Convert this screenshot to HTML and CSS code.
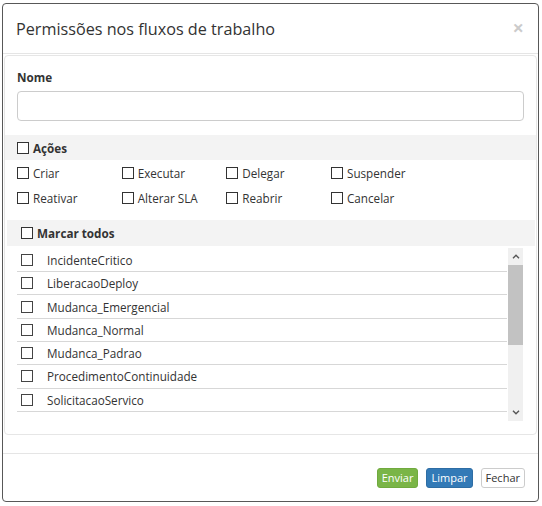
FILE: index.html
```html
<!DOCTYPE html>
<html lang="pt">
<head>
<meta charset="utf-8">
<title>Permissões nos fluxos de trabalho</title>
<link rel="stylesheet" href="styles.css">
</head>
<body>
<div class="modal">
  <div class="modal-header">
    <h4 class="modal-title">Permissões nos fluxos de trabalho</h4>
    <span class="close">×</span>
  </div>
  <div class="panel">
    <label class="field-label">Nome</label>
    <input class="text-input" type="text">
    <div class="section-bar">
      <input class="chk" type="checkbox"><span>Ações</span>
    </div>
    <div class="actions">
      <label class="action"><input class="chk" type="checkbox"><span>Criar</span></label>
      <label class="action"><input class="chk" type="checkbox"><span>Executar</span></label>
      <label class="action"><input class="chk" type="checkbox"><span>Delegar</span></label>
      <label class="action"><input class="chk" type="checkbox"><span>Suspender</span></label>
      <label class="action"><input class="chk" type="checkbox"><span>Reativar</span></label>
      <label class="action"><input class="chk" type="checkbox"><span>Alterar SLA</span></label>
      <label class="action"><input class="chk" type="checkbox"><span>Reabrir</span></label>
      <label class="action"><input class="chk" type="checkbox"><span>Cancelar</span></label>
    </div>
    <div class="workflows">
      <div class="wf-bar">
        <input class="chk" type="checkbox"><span>Marcar todos</span>
      </div>
      <div class="wf-list">
        <div class="rows">
          <div class="row"><input class="chk row-chk" type="checkbox"><span>IncidenteCritico</span></div>
          <div class="row"><input class="chk row-chk" type="checkbox"><span>LiberacaoDeploy</span></div>
          <div class="row"><input class="chk row-chk" type="checkbox"><span>Mudanca_Emergencial</span></div>
          <div class="row"><input class="chk row-chk" type="checkbox"><span>Mudanca_Normal</span></div>
          <div class="row"><input class="chk row-chk" type="checkbox"><span>Mudanca_Padrao</span></div>
          <div class="row"><input class="chk row-chk" type="checkbox"><span>ProcedimentoContinuidade</span></div>
          <div class="row"><input class="chk row-chk" type="checkbox"><span>SolicitacaoServico</span></div>
        </div>
        <div class="scrollbar">
          <div class="sb-arrow"><svg width="8" height="5" viewBox="0 0 8 5"><path d="M1 4.3 L4 1.3 L7 4.3" stroke="#555" stroke-width="1.4" fill="none"/></svg></div>
          <div class="sb-thumb"></div>
          <div class="sb-track"></div>
          <div class="sb-arrow"><svg width="8" height="5" viewBox="0 0 8 5"><path d="M1 0.7 L4 3.7 L7 0.7" stroke="#555" stroke-width="1.4" fill="none"/></svg></div>
        </div>
      </div>
    </div>
  </div>
  <div class="modal-footer">
    <button class="btn btn-success">Enviar</button>
    <button class="btn btn-primary">Limpar</button>
    <button class="btn btn-default">Fechar</button>
  </div>
</div>
</body>
</html>
```
FILE: styles.css
```css
html, body {
  margin: 0;
  padding: 0;
  background: #fff;
}
body {
  font-family: "Open Sans", "DejaVu Sans", sans-serif;
  font-size: 11.7px;
  color: #333;
}
.modal {
  box-sizing: border-box;
  width: 537px;
  height: 499px;
  margin: 3px 0 0 2px;
  border: 1px solid #585858;
  border-radius: 4px;
  background: #fff;
  display: flex;
  flex-direction: column;
}
.modal-header {
  box-sizing: border-box;
  height: 50px;
  flex: none;
  border-bottom: 1px solid #e5e5e5;
  display: flex;
  align-items: center;
  justify-content: space-between;
  padding: 0 14px 0 13px;
}
.modal-title {
  margin: 0;
  font-size: 16.2px;
  font-weight: 400;
  color: #333;
  line-height: 20px;
}
.close {
  font-size: 20px;
  font-weight: 700;
  line-height: 1;
  color: #000;
  opacity: 0.2;
  margin-top: -2px;
}
.panel {
  box-sizing: border-box;
  flex: none;
  height: 380px;
  margin: 1px 1px 18px 1px;
  border: 1px solid #e6e6e6;
  border-radius: 4px;
  padding-top: 13px;
}
.field-label {
  display: block;
  margin: 0 12px;
  font-weight: 700;
  line-height: 17px;
}
.text-input {
  display: block;
  box-sizing: border-box;
  width: calc(100% - 24px);
  height: 30px;
  margin: 5px 12px 0;
  border: 1px solid #ccc;
  border-radius: 4px;
  padding: 0 8px;
  font: inherit;
}
.chk {
  appearance: none;
  -webkit-appearance: none;
  box-sizing: border-box;
  width: 12px;
  height: 12px;
  margin: 0 4px 0 0;
  border: 1px solid #333;
  border-radius: 0;
  background: #fff;
  flex: none;
}
.section-bar {
  margin-top: 14px;
  height: 25px;
  background: #f3f3f3;
  display: flex;
  align-items: center;
  padding-left: 12px;
  font-weight: 700;
}
.actions {
  display: grid;
  grid-template-columns: repeat(4, 104.67px);
  grid-auto-rows: 25px;
  padding-left: 12px;
}
.action {
  display: flex;
  align-items: center;
  white-space: nowrap;
}
.workflows {
  margin: 10px 1px 0 2px;
}
.wf-bar {
  height: 26px;
  background: #f3f3f3;
  display: flex;
  align-items: center;
  padding-left: 14px;
  font-weight: 700;
}
.wf-list {
  display: flex;
  height: 175px;
  padding: 0 12px 0 10px;
}
.rows {
  width: 490px;
  flex: none;
  padding-top: 2.7px;
  overflow: hidden;
  margin-right: 1px;
}
.row {
  box-sizing: border-box;
  height: 23.33px;
  border-bottom: 1px solid #d7d7d7;
  display: flex;
  align-items: center;
  padding-left: 4px;
  white-space: nowrap;
}
.row-chk {
  margin-right: 14px;
  border-color: #444;
}
.scrollbar {
  width: 15px;
  height: 173px;
  margin-top: 2px;
  background: #f0f0f0;
  display: flex;
  flex-direction: column;
  flex: none;
}
.sb-arrow {
  height: 17px;
  display: flex;
  align-items: center;
  justify-content: center;
  flex: none;
}
.sb-thumb {
  height: 80px;
  background: #c2c2c2;
  flex: none;
}
.sb-track {
  flex: 1;
}
.modal-footer {
  flex: 1;
  border-top: 1px solid #e5e5e5;
  display: flex;
  justify-content: flex-end;
  align-items: flex-start;
  gap: 8px;
  padding: 14px 13px 0;
}
.btn {
  box-sizing: border-box;
  height: 20px;
  padding: 0 4px;
  font-family: "Open Sans", "DejaVu Sans", sans-serif;
  font-size: 11px;
  line-height: 18px;
  border: 1px solid transparent;
  border-radius: 3px;
  cursor: pointer;
}
.btn-success {
  background: #7ab547;
  border-color: #70aa3e;
  color: #fff;
}
.btn-primary {
  background: #337ab7;
  border-color: #2e6da4;
  color: #fff;
}
.btn-default {
  background: #fff;
  border-color: #ccc;
  color: #333;
}
```
